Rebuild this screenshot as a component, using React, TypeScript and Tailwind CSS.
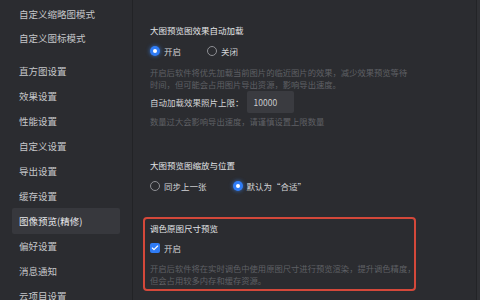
import { Check } from 'lucide-react';

const font = { fontFamily: '"Noto Sans CJK SC", "Noto Sans", sans-serif' };

const navTop = ['自定义缩略图模式', '自定义图标模式'];
const navMain = [
  '直方图设置',
  '效果设置',
  '性能设置',
  '自定义设置',
  '导出设置',
  '缓存设置',
  '图像预览(精修)',
  '偏好设置',
  '消息通知',
  '云项目设置',
];

function Radio({ checked, label }: { checked: boolean; label: string }) {
  return (
    <div className="flex items-center gap-[4px] h-[12px]">
      {checked ? (
        <div className="w-[10px] h-[10px] rounded-full bg-[#2f7cf6] flex items-center justify-center shadow-[0_0_4px_rgba(60,140,255,0.7)]">
          <div className="w-[4px] h-[4px] rounded-full bg-white" />
        </div>
      ) : (
        <div className="w-[10px] h-[10px] rounded-full border border-[#8e8f94]" />
      )}
      <span className="text-[8.5px] leading-[12px] text-[#d3d4d7]">{label}</span>
    </div>
  );
}

export default function App() {
  return (
    <div className="w-[480px] h-[300px] overflow-hidden flex bg-[#2b2c30]" style={font}>
      {/* Sidebar */}
      <div className="w-[133px] shrink-0 border-r border-[#222326] flex flex-col">
        <div className="flex flex-col pt-[2px] pb-[3px]">
          {navTop.map((t) => (
            <div key={t} className="h-[24px] flex items-center pl-[19px] text-[9.5px] leading-[12px] text-[#c6c7ca]">
              {t}
            </div>
          ))}
        </div>
        <div className="h-px bg-[#3a3b3f]" />
        <div className="flex flex-col pt-[5px]">
          {navMain.map((t) => (
            <div
              key={t}
              className={
                t === '图像预览(精修)'
                  ? 'h-[26px] -my-[0.5px] mx-[12px] flex items-center pl-[7px] text-[9.5px] leading-[12px] text-[#e6e7ea] bg-[#37383d] rounded-[2px]'
                  : 'h-[25px] flex items-center pl-[19px] text-[9.5px] leading-[12px] text-[#c6c7ca]'
              }
            >
              {t}
            </div>
          ))}
        </div>
      </div>

      {/* Content */}
      <div className="flex-1 flex flex-col pl-[10px] pt-[24px]">
        <div className="pl-[7px] flex flex-col">
          <div className="text-[8.5px] leading-[12px] text-[#e3e4e7]">大图预览图效果自动加载</div>
          <div className="flex items-center gap-[26px] mt-[9px]">
            <Radio checked label="开启" />
            <Radio checked={false} label="关闭" />
          </div>
          <div className="mt-[9px] text-[8.3px] leading-[12px] text-[#5f6065] whitespace-nowrap">
            开启后软件将优先加载当前图片的临近图片的效果，减少效果预览等待
            <br />
            时间，但可能会占用图片导出资源，影响导出速度。
          </div>
          <div className="flex items-center mt-[1px]">
            <span className="text-[8.5px] leading-[12px] text-[#d3d4d7]">自动加载效果照片上限：</span>
            <div className="ml-[3px] w-[47px] h-[22px] bg-[#3a3b40] flex items-center pl-[7px] text-[8.5px] text-[#c9cacd] rounded-[2px]">
              10000
            </div>
          </div>
          <div className="mt-[2px] text-[8.3px] leading-[12px] text-[#5f6065]">数量过大会影响导出速度，请谨慎设置上限数量</div>

          <div className="mt-[32px] text-[8.5px] leading-[12px] text-[#e3e4e7]">大图预览图缩放与位置</div>
          <div className="flex items-center gap-[26px] mt-[9px]">
            <Radio checked={false} label="同步上一张" />
            <Radio checked label="默认为“合适”" />
          </div>
        </div>

        <div className="mt-[25px] w-[273px] h-[74px] border-2 border-[#d4483a] rounded-[4px] pl-[5px] pt-[3px] flex flex-col">
          <div className="text-[8.5px] leading-[12px] text-[#e3e4e7]">调色原图尺寸预览</div>
          <div className="flex items-center gap-[4px] mt-[8px] h-[12px]">
            <div className="w-[10px] h-[10px] rounded-[2px] bg-[#2f7cf6] flex items-center justify-center">
              <Check size={8} strokeWidth={3.5} color="white" />
            </div>
            <span className="text-[8.5px] leading-[12px] text-[#d3d4d7]">开启</span>
          </div>
          <div className="mt-[8px] text-[8.3px] leading-[12px] text-[#5f6065] whitespace-nowrap">
            开启后软件将在实时调色中使用原图尺寸进行预览渲染，提升调色精度，
            <br />
            但会占用较多内存和缓存资源。
          </div>
        </div>
      </div>

      {/* Right edge */}
      <div className="w-[4px] shrink-0 border-l border-[#232427] bg-[#303135]" />
    </div>
  );
}
